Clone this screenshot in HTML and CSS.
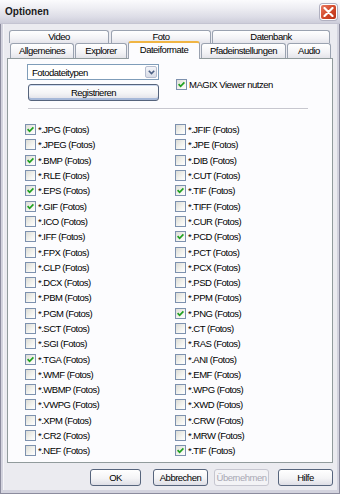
FILE: index.html
```html
<!DOCTYPE html>
<html lang="de">
<head>
  <meta charset="UTF-8">
  <title>Optionen</title>
  <link rel="stylesheet" href="styles.css">
</head>
<body>

<div class="window">
  <div class="titlebar">
    <span class="title">Optionen</span>
    <span class="close-btn">
      <svg width="11" height="10" viewBox="0 0 11 10"><path d="M1.5 1 L9.5 9 M9.5 1 L1.5 9" stroke="#fff" stroke-width="2.2" stroke-linecap="round"/></svg>
    </span>
  </div>

  <div class="dialog-body">
    <div class="tabs">
      <div class="tab-row back">
        <div class="tab w-video">Video</div>
        <div class="tab w-foto">Foto</div>
        <div class="tab w-db">Datenbank</div>
      </div>
      <div class="tab-row front">
        <div class="tab w-allg">Allgemeines</div>
        <div class="tab w-expl">Explorer</div>
        <div class="tab active w-datei">Dateiformate</div>
        <div class="tab w-pfad">Pfadeinstellungen</div>
        <div class="tab w-audio">Audio</div>
      </div>
    </div>

    <div class="panel">
      <div class="top-controls">
        <div class="left-controls">
          <div class="combo">
            <span class="combo-text">Fotodateitypen</span>
            <span class="combo-btn">
              <svg width="7" height="5" viewBox="0 0 7 5"><path d="M0.8 0.8 L3.5 3.6 L6.2 0.8" fill="none" stroke="#4d6185" stroke-width="1.6"/></svg>
            </span>
          </div>
          <div class="btn default wide">Registrieren</div>
        </div>
        <label class="check magix"><span class="box checked"></span>MAGIX Viewer nutzen</label>
      </div>

      <div class="separator"></div>

      <div class="formats" id="formats"></div>
    </div>

    <div class="buttons">
      <div class="btn w-ok">OK</div>
      <div class="btn w-abbr">Abbrechen</div>
      <div class="btn disabled w-ueber">Übernehmen</div>
      <div class="btn w-hilfe">Hilfe</div>
    </div>
  </div>
</div>

<script>
  const formats = [
    ["JPG", 1], ["JPEG", 0], ["BMP", 1], ["RLE", 0], ["EPS", 1], ["GIF", 1],
    ["ICO", 0], ["IFF", 0], ["FPX", 0], ["CLP", 0], ["DCX", 0], ["PBM", 0],
    ["PGM", 0], ["SCT", 0], ["SGI", 0], ["TGA", 1], ["WMF", 0], ["WBMP", 0],
    ["VWPG", 0], ["XPM", 0], ["CR2", 0], ["NEF", 0],
    ["JFIF", 0], ["JPE", 0], ["DIB", 0], ["CUT", 0], ["TIF", 1], ["TIFF", 0],
    ["CUR", 0], ["PCD", 1], ["PCT", 0], ["PCX", 0], ["PSD", 0], ["PPM", 0],
    ["PNG", 1], ["CT", 0], ["RAS", 0], ["ANI", 0], ["EMF", 0], ["WPG", 0],
    ["XWD", 0], ["CRW", 0], ["MRW", 0], ["TIF", 1]
  ];

  const list = document.getElementById("formats");
  formats.forEach(([ext, on]) => {
    list.innerHTML += `<label class="check"><span class="box${on ? " checked" : ""}"></span>*.${ext} (Fotos)</label>`;
  });

  document.querySelectorAll(".box.checked").forEach(box => {
    box.innerHTML = `<svg width="9" height="9" viewBox="0 0 9 9"><path d="M1.6 4.2 L3.6 6.3 L7.4 2.3" fill="none" stroke="#21a121" stroke-width="1.7"/></svg>`;
  });
</script>

</body>
</html>
```

FILE: styles.css
```css
body {
  margin: 0;
  font-family: "Liberation Sans", Arial, sans-serif;
  font-size: 9.5px;
  letter-spacing: -0.5px;
  color: #000;
  background: #fff;
}

.window {
  width: 340px;
  height: 494px;
  box-sizing: border-box;
  background: #d3d3de;
  border: 1px solid #8c8c9e;
  border-top: none;
  display: flex;
  flex-direction: column;
}

.titlebar {
  height: 24px;
  margin: 0 -1px;
  display: flex;
  align-items: center;
  justify-content: space-between;
  padding: 0 3px 0 5px;
  background: linear-gradient(180deg, #fbfbfd 0%, #eeeef3 35%, #dcdce6 75%, #cdcdda 100%);
  border-bottom: 1px solid #c4c4d2;
  box-sizing: border-box;
}

.title {
  font-weight: bold;
  font-size: 10px;
  letter-spacing: 0;
  color: #1b1b1b;
}

.close-btn {
  width: 17px;
  height: 16px;
  box-sizing: border-box;
  border: 1px solid #fff;
  border-radius: 3px;
  background: linear-gradient(135deg, #e97a62 0%, #d34a2c 50%, #b93218 100%);
  display: flex;
  align-items: center;
  justify-content: center;
  box-shadow: 0 0 0 1px #b0b0c0;
}

.dialog-body {
  flex: 1;
  margin: 0 2px 3px;
  background: #ebebf0;
  display: flex;
  flex-direction: column;
  border-left: 1px solid #f6f6f9;
}

/* tabs */
.tabs {
  margin-top: 6px;
  padding-left: 5px;
}

.tab-row {
  display: flex;
  align-items: flex-end;
}

.tab-row.back {
  height: 13px;
  gap: 1px;
}

.tab-row.front {
  height: 15px;
  gap: 1px;
  padding-left: 1px;
}

.tab {
  box-sizing: border-box;
  border: 1px solid #9aa2b0;
  border-bottom: none;
  border-radius: 3px 3px 0 0;
  background: linear-gradient(180deg, #ffffff 0%, #f3f3f6 60%, #e4e4ea 100%);
  text-align: center;
  height: 100%;
  line-height: 12px;
  white-space: nowrap;
}

.tab-row.front .tab {
  line-height: 14px;
}

.tab-row.front .tab.active {
  height: 18px;
  margin-bottom: -1px;
  position: relative;
  z-index: 2;
  background: #fcfcfe;
  border-top: 2px solid #f0b544;
  line-height: 14px;
}

.w-video { width: 100px; }
.w-foto { width: 100px; margin-left: 1px; }
.w-db { width: 118px; }
.w-allg { width: 64px; }
.w-expl { width: 52px; }
.w-datei { width: 72px; }
.w-pfad { width: 85px; }
.w-audio { width: 44px; }

/* panel */
.panel {
  margin-left: 3px;
  width: 326px;
  height: 405px;
  box-sizing: border-box;
  border: 1px solid #919b9c;
  background: #fcfcfe;
  padding: 5px 0 0 19px;
}

.top-controls {
  display: flex;
}

.left-controls {
  width: 132px;
  display: flex;
  flex-direction: column;
  gap: 4px;
}

.combo {
  height: 16px;
  box-sizing: border-box;
  border: 1px solid #7f9db9;
  background: #fff;
  display: flex;
  align-items: center;
  padding: 1px;
}

.combo-text {
  flex: 1;
  padding-left: 3px;
}

.combo-btn {
  width: 12px;
  height: 12px;
  box-sizing: border-box;
  border: 1px solid #b5bdcf;
  border-radius: 2px;
  background: linear-gradient(180deg, #f4f5f9, #d8dce6);
  display: flex;
  align-items: center;
  justify-content: center;
}

.btn {
  box-sizing: border-box;
  height: 17px;
  border: 1px solid #56647c;
  border-radius: 3px;
  background: linear-gradient(180deg, #ffffff 0%, #f4f4f6 55%, #dedee6 100%);
  display: flex;
  align-items: center;
  justify-content: center;
}

.btn.wide {
  margin-left: 1px;
}

.btn.default {
  box-shadow: inset 0 -2px 0 #a6b8d8, inset 0 1px 0 #cddaf0;
}

.btn.disabled {
  color: #a8a8b4;
  border-color: #c6c6d0;
  background: #f3f3f6;
}

.check {
  display: flex;
  align-items: center;
  gap: 2px;
  white-space: nowrap;
}

.check.magix {
  margin-left: 17px;
  margin-top: 15px;
  align-self: flex-start;
  height: 11px;
}

.box {
  width: 11px;
  height: 11px;
  box-sizing: border-box;
  border: 1px solid #7d91ae;
  background: linear-gradient(135deg, #dcdcd6 0%, #f4f4f0 60%, #fff 100%);
  display: flex;
  align-items: center;
  justify-content: center;
  flex-shrink: 0;
}

.separator {
  width: 280px;
  margin: 7px 0 0 1px;
  border-top: 1px solid #c7c7cf;
  border-bottom: 1px solid #fff;
}

.formats {
  margin: 12px 0 0 -2px;
  display: grid;
  grid-template-columns: 150px 150px;
  grid-template-rows: repeat(22, 15.3px);
  grid-auto-flow: column;
}

/* bottom buttons */
.buttons {
  display: flex;
  margin-top: 6px;
  padding-left: 86px;
}

.w-ok { width: 51px; }
.w-abbr { width: 55px; margin-left: 12px; }
.w-ueber { width: 55px; margin-left: 6px; }
.w-hilfe { width: 55px; margin-left: 9px; }
```
